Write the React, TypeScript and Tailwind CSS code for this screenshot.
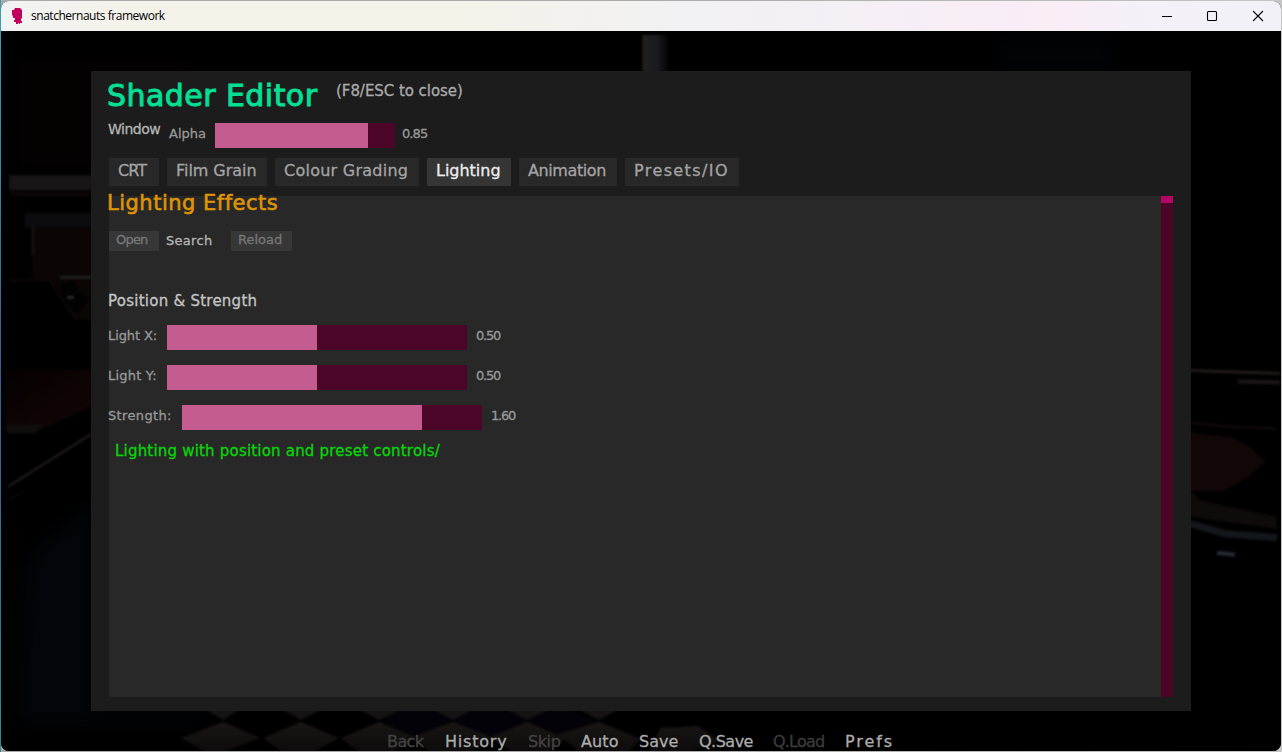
import { clsx } from 'clsx';

function Backdrop() {
  return (
    <svg className="absolute inset-0 h-full w-full" viewBox="1 31 1280 720" preserveAspectRatio="none" aria-hidden="true">
      <defs>
        <linearGradient id="pillar" x1="0" x2="1" y1="0" y2="0">
          <stop offset="0" stopColor="#202020" />
          <stop offset="0.55" stopColor="#1b1b1e" />
          <stop offset="1" stopColor="#000" />
        </linearGradient>
        <linearGradient id="seat" x1="0" x2="1" y1="0" y2="1">
          <stop offset="0" stopColor="#060101" />
          <stop offset="1" stopColor="#130605" />
        </linearGradient>
        <linearGradient id="tile" x1="0" x2="0" y1="0" y2="1">
          <stop offset="0" stopColor="#1a1616" />
          <stop offset="1" stopColor="#0d0b0b" />
        </linearGradient>
        <filter id="soft" colorInterpolationFilters="sRGB">
          <feGaussianBlur stdDeviation="0.8" />
        </filter>
        <filter id="haze" colorInterpolationFilters="sRGB">
          <feGaussianBlur stdDeviation="9" />
        </filter>
      </defs>
      <rect x="1" y="31" width="1280" height="720" fill="#000" />
      <g filter="url(#haze)">
        <path d="M20 60H190V165H20Z" fill="#040101" />
        <path d="M90 505L30 560L20 720H200V711H91Z" fill="#02060a" />
        <path d="M1000 40H1110V70H1000Z" fill="#010308" />
      </g>
      <g filter="url(#soft)">
        <rect x="642" y="35" width="28" height="40" fill="url(#pillar)" />
        <path d="M642.5 35V72" stroke="#2a0c05" />
        <path d="M9 175H92V190H9Z" fill="#171515" />
        <path d="M9 192H92V196H9Z" fill="#0d0606" />
        <path d="M25 213H92V227H25Z" fill="#0c0c0e" />
        <path d="M32 228H92V320L75 318L60 290L50 280L32 278Z" fill="#0b0505" />
        <path d="M33 225V255" stroke="#151112" strokeWidth="3" />
        <path d="M60 277H91" stroke="#202020" strokeWidth="3" />
        <path d="M60 283L74 280L80 294L90 298L77 314L66 304Z" fill="#020202" />
        <path d="M67 297H74" stroke="#29292b" strokeWidth="3" />
        <path d="M10 280H50L60 296L76 319" fill="none" stroke="#100808" strokeWidth="2" />
        <path d="M5 369H92V405L40 430H5Z" fill="url(#seat)" />
        <path d="M7 424H45L34 433H7Z" fill="#100d0d" />
        <path d="M8 486L92 433" fill="none" stroke="#241d20" strokeWidth="2" />
        <path d="M8 499L24 491" fill="none" stroke="#121215" />
        <path d="M1190 370L1280 373" stroke="#211a19" strokeWidth="3" />
        <path d="M1238 381L1280 382" stroke="#1c1717" strokeWidth="4" />
        <path d="M1190 422L1228 426L1276 428" fill="none" stroke="#140b0e" strokeWidth="2" />
        <path d="M1190 432L1232 437L1250 446L1265 461L1248 477L1223 490H1190Z" fill="#120707" />
        <path d="M1190 490L1201 500L1276 516L1277 528L1190 516Z" fill="#0f0b0a" />
        <path d="M1190 523L1225 533L1277 537" fill="none" stroke="#13171b" strokeWidth="7" />
        <path d="M1217 552L1235 554" stroke="#272a36" strokeWidth="4" />
        <path d="M379 720L417 736L453 720L490 737L527 720L558 733L599 720L570 709H390Z" fill="#020208" />
        <path d="M205 708H240L223 719ZM281 708H323L301 719ZM358 708H402L379 719ZM432 708H474L453 719ZM506 708H550L527 719ZM578 708H619L599 719Z" fill="#151313" />
        <path d="M181 737L223 721L260 737L223 751H205ZM263 737L301 721L339 737L314 751H282ZM341 737L379 721L417 737L393 751H359ZM412 736L453 721L494 737L470 751H430ZM490 736L527 721L566 737L548 751H512ZM558 733L599 721L641 738L628 751H580ZM660 727L698 725L720 740L690 751H650Z" fill="url(#tile)" />
      </g>
    </svg>
  );
}

function TitleBar() {
  return (
    <header className="flex h-[30px] shrink-0 items-center bg-[linear-gradient(90deg,#f1f3f3_0%,#f5f2ea_10%,#f5f2ea_36%,#f4f1ee_44%,#f2f2f1_49%,#f2f1f5_56%,#f5eff6_66%,#f9edf6_82%,#f4f1f8_90%,#f2f1f8_100%)] pl-[10px] text-black">
      <svg width="13" height="18" viewBox="0 0 13 18" aria-hidden="true">
        <path d="M4 1H9L11 3V11L10 12V14H11V16H9V17H8V16H7V17H5V15H3V13H4V11H2V9L1 8V3H3Z" fill="#c4005e" />
        <path d="M3 4H5V5H3ZM6 7H9V8H6ZM4 11H7V12H4Z" fill="#a20150" />
      </svg>
      <h1 className="ml-[7px] font-['Open_Sans',sans-serif] text-[12px] leading-[18px] tracking-[-0.47px]">snatchernauts framework</h1>
      <div className="ml-auto flex items-center">
        <button className="flex h-[30px] w-[45px] items-center justify-center" aria-label="Minimize">
          <svg width="12" height="12" viewBox="0 0 12 12"><path d="M1 6.5H11" stroke="#000" /></svg>
        </button>
        <button className="flex h-[30px] w-[46px] items-center justify-center" aria-label="Maximize">
          <svg width="12" height="12" viewBox="0 0 12 12"><rect x="1.5" y="1.5" width="9" height="9" rx="1" fill="none" stroke="#000" strokeWidth="1.1" /></svg>
        </button>
        <button className="flex h-[30px] w-[46px] items-center justify-center" aria-label="Close">
          <svg width="12" height="12" viewBox="0 0 12 12"><path d="M1 1L11 11M11 1L1 11" stroke="#000" strokeWidth="1.1" /></svg>
        </button>
      </div>
    </header>
  );
}

function Slider({ value, className }: { value: number; className: string }) {
  return (
    <div className={clsx('h-[25px] shrink-0 bg-[#4b0526]', className)}>
      <div className="h-full bg-[#c55c8f]" style={{ width: `${value * 100}%` }} />
    </div>
  );
}

const tabs = [
  { name: 'CRT', look: 'w-[50px] tracking-[-0.9px]' },
  { name: 'Film Grain', look: 'w-[100px] tracking-[-0.05px]' },
  { name: 'Colour Grading', look: 'w-[144px] tracking-[0.25px]' },
  { name: 'Lighting', look: 'w-[84px] tracking-[-0.02px]', active: true },
  { name: 'Animation', look: 'w-[98px] tracking-[-0.4px]' },
  { name: 'Presets/IO', look: 'w-[114px] tracking-[1.4px]' },
];

const controls = [
  { name: 'Light X:', value: 0.5, shown: '0.50', label: 'w-[58px] tracking-[-0.1px]' },
  { name: 'Light Y:', value: 0.5, shown: '0.50', label: 'w-[58px] tracking-[0.2px]' },
  { name: 'Strength:', value: 0.8, shown: '1.60', label: 'w-[73px] tracking-[0.35px]' },
];

const menu = [
  { name: 'Back', look: 'w-[58px] tracking-[-0.6px] text-[#444444]' },
  { name: 'History', look: 'w-[83px] tracking-[0.8px] text-[#acacac]' },
  { name: 'Skip', look: 'w-[53px] tracking-[-0.4px] text-[#444444]' },
  { name: 'Auto', look: 'w-[58px] tracking-[0.1px] text-[#acacac]' },
  { name: 'Save', look: 'w-[60px] text-[#acacac]' },
  { name: 'Q.Save', look: 'w-[74px] tracking-[-0.5px] text-[#acacac]' },
  { name: 'Q.Load', look: 'w-[72px] tracking-[-0.8px] text-[#3c3c3c]' },
  { name: 'Prefs', look: 'w-[60px] tracking-[1.9px] text-[#acacac]' },
];

function LightingPage() {
  return (
    <section className="min-w-0 flex-1 bg-[#282828]">
      <h3 className="-mt-[5px] -ml-[2px] h-[24px] text-[21px] leading-[25px] tracking-[0.5px] text-[#df9405] [-webkit-text-stroke:0.6px]">Lighting Effects</h3>
      <div className="mt-[16px] flex h-[20px] text-[13px] leading-[20px]">
        <button className="flex h-[20px] w-[50px] items-center bg-[#373737] pb-[3px] pl-[7px] tracking-[-0.8px] text-[#777777]">Open</button>
        <span className="ml-[7px] w-[65px] tracking-[0.3px] text-[#b5b5b5]">Search</span>
        <button className="flex h-[20px] w-[61px] items-center bg-[#373737] pb-[3px] pl-[7px] text-[#777777]">Reload</button>
      </div>
      <h4 className="mt-[40px] -ml-px h-[20px] text-[15px] leading-[20px] tracking-[0.25px] text-[#c4c4c4]">Position &amp; Strength</h4>
      <div className="mt-[14px] flex flex-col gap-[15px] text-[13px] leading-[21px]">
        {controls.map((c) => (
          <div key={c.name} className="flex h-[25px]">
            <span className={clsx('-indent-px whitespace-nowrap text-[#999999]', c.label)}>{c.name}</span>
            <Slider value={c.value} className="w-[300px]" />
            <span className="ml-[9px] tracking-[-1.2px] text-[#999999]">{c.shown}</span>
          </div>
        ))}
      </div>
      <p className="mt-[11px] pl-[6px] text-[15px] leading-[20px] tracking-[0.2px] text-[#08d608]">Lighting with position and preset controls/</p>
    </section>
  );
}

export default function App() {
  return (
    <div className="h-[752px] w-[1282px] overflow-hidden bg-linear-to-b from-[#36a1b0] via-[#375e91] to-[#348691] pl-px">
      <div className="h-full bg-linear-to-r from-[#aaa9aa] via-[#aaa9aa] to-[#c5c5c5] py-px pr-px">
        <div className="flex h-[750px] w-[1280px] flex-col overflow-hidden rounded-[8px] bg-black font-['DejaVu_Sans',sans-serif]">
          <TitleBar />
          <div className="relative flex-1 [-webkit-text-stroke:0.3px]">
            <Backdrop />
            <div className="relative flex h-full flex-col items-center pt-[40px]">
              <main className="flex h-[640px] w-[1100px] shrink-0 flex-col bg-[#1c1c1c] px-[18px]">
                <div className="flex h-[52px] pt-[10px]">
                  <h2 className="-ml-[2px] w-[229px] whitespace-nowrap text-[30px] leading-[30px] tracking-[0.45px] text-[#05df93] [-webkit-text-stroke:1px]">Shader Editor</h2>
                  <span className="text-[15px] leading-[20px] tracking-[-0.05px] text-[#aaaaaa]">(F8/ESC to close)</span>
                </div>
                <div className="flex h-[25px] text-[13px]">
                  <span className="-ml-px w-[61px] text-[14px] leading-[13px] tracking-[-0.5px] text-[#b5b5b5]">Window</span>
                  <span className="w-[46px] leading-[21px] text-[#999999]">Alpha</span>
                  <Slider value={0.85} className="w-[180px]" />
                  <span className="ml-[7px] leading-[21px] tracking-[-0.9px] text-[#999999]">0.85</span>
                </div>
                <nav className="mt-[10px] flex h-[28px] gap-2 text-[16px]">
                  {tabs.map((t) => (
                    <button key={t.name} className={clsx('flex items-center whitespace-nowrap pb-[2px] pl-[9px]', t.look, t.active ? 'bg-[#353535] text-[#eeeeee]' : 'bg-[#282828] text-[#a4a4a4]')}>
                      {t.name}
                    </button>
                  ))}
                </nav>
                <div className="mt-[10px] flex h-[501px]">
                  <LightingPage />
                  <div className="w-[12px] bg-[#4b0526]">
                    <div className="h-[7px] bg-[#b50562]" />
                  </div>
                </div>
              </main>
              <nav className="flex w-full pt-[21px] pl-[386px] text-[16px] leading-[20px]">
                {menu.map((m) => (
                  <button key={m.name} className={clsx('whitespace-nowrap text-left', m.look)}>{m.name}</button>
                ))}
              </nav>
            </div>
          </div>
        </div>
      </div>
    </div>
  );
}
